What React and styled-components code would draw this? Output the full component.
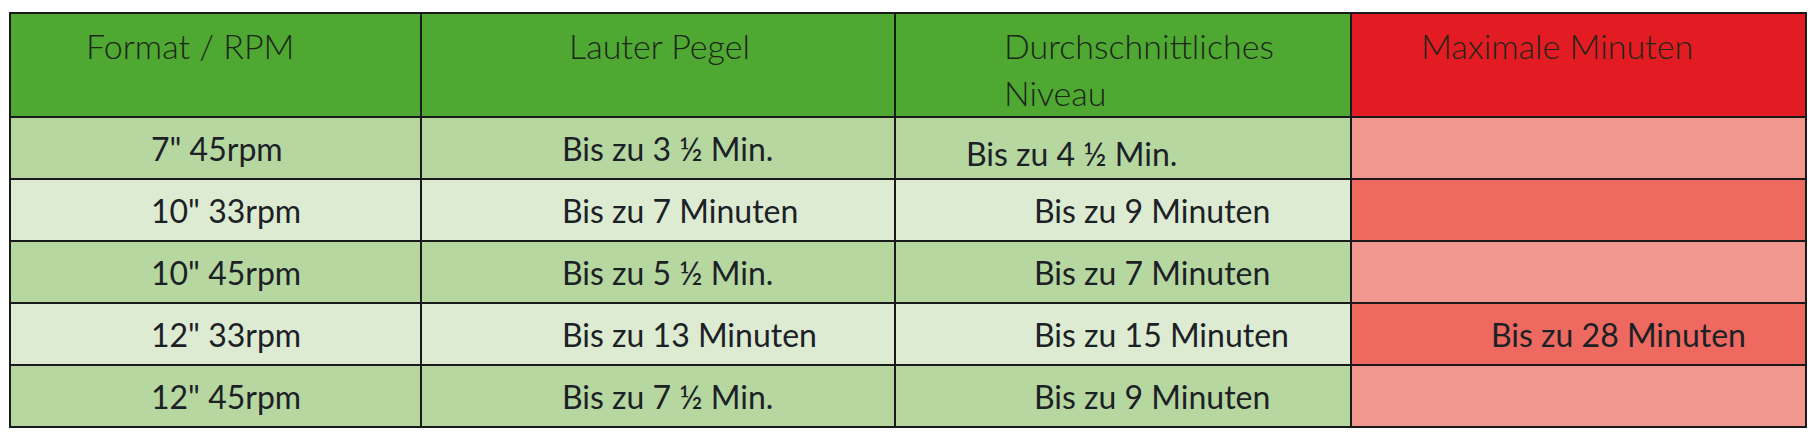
import React from "react";
import styled, { createGlobalStyle } from "styled-components";

const GlobalStyle = createGlobalStyle`
  body {
    margin: 0;
    background: #ffffff;
    font-family: Lato, "Open Sans", sans-serif;
  }
`;

const Page = styled.div`
  padding: 12px 0 0 9px;
`;

const Table = styled.table`
  border-collapse: collapse;
  table-layout: fixed;
  width: 1796px;
  color: #1c2126;
`;

const HeadCell = styled.th`
  background: ${(p) => (p.$red ? "#e31b23" : "#4ea832")};
  border: 2px solid #1a1a1a;
  height: 100px;
  box-sizing: border-box;
  padding: 8px 0 0 ${(p) => p.$indent}px;
  vertical-align: top;
  text-align: left;
  font-weight: 300;
  font-size: 34px;
  line-height: 47px;
  color: #1d2618;
`;

const Cell = styled.td`
  background: ${(p) => p.$bg};
  border: 2px solid #1a1a1a;
  height: 62px;
  box-sizing: border-box;
  padding: ${(p) => p.$drop || 0}px 0 0 ${(p) => p.$indent ?? 139}px;
  font-size: 32px;
  font-weight: 400;
  white-space: nowrap;
  vertical-align: middle;
`;

const greens = ["#b7d7a1", "#ddebd2"];
const reds = ["#f2978f", "#ee6a61"];

const rows = [
  { format: '7" 45rpm', loud: "Bis zu 3 ½ Min.", avg: "Bis zu 4 ½ Min.", avgIndent: 70, avgDrop: 10 },
  { format: '10" 33rpm', loud: "Bis zu 7 Minuten", avg: "Bis zu 9 Minuten" },
  { format: '10" 45rpm', loud: "Bis zu 5 ½ Min.", avg: "Bis zu 7 Minuten" },
  { format: '12" 33rpm', loud: "Bis zu 13 Minuten", avg: "Bis zu 15 Minuten", max: "Bis zu 28 Minuten" },
  { format: '12" 45rpm', loud: "Bis zu 7 ½ Min.", avg: "Bis zu 9 Minuten" },
];

export default function App() {
  return (
    <Page>
      <GlobalStyle />
      <Table>
        <colgroup>
          <col style={{ width: 411 }} />
          <col style={{ width: 474 }} />
          <col style={{ width: 456 }} />
          <col style={{ width: 455 }} />
        </colgroup>
        <thead>
          <tr>
            <HeadCell $indent={75}>Format / RPM</HeadCell>
            <HeadCell $indent={147}>Lauter Pegel</HeadCell>
            <HeadCell $indent={108}>
              Durchschnittliches
              <br />
              Niveau
            </HeadCell>
            <HeadCell $indent={69} $red>
              Maximale Minuten
            </HeadCell>
          </tr>
        </thead>
        <tbody>
          {rows.map((r, i) => (
            <tr key={r.format}>
              <Cell $bg={greens[i % 2]} $indent={140}>
                {r.format}
              </Cell>
              <Cell $bg={greens[i % 2]} $indent={140}>
                {r.loud}
              </Cell>
              <Cell $bg={greens[i % 2]} $indent={r.avgIndent ?? 138} $drop={r.avgDrop}>
                {r.avg}
              </Cell>
              <Cell $bg={reds[i % 2]} $indent={139}>
                {r.max}
              </Cell>
            </tr>
          ))}
        </tbody>
      </Table>
    </Page>
  );
}
